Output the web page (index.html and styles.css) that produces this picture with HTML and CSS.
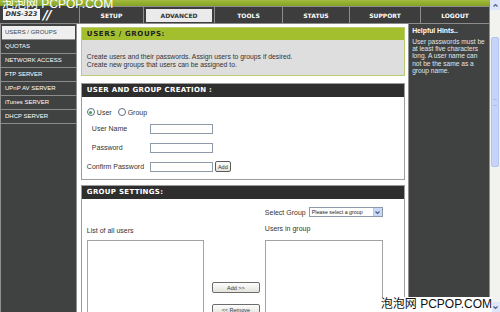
FILE: index.html
```html
<html>
<head>
<title>DNS-323 - Users / Groups</title>
<meta name="viewport" content="width=device-width, initial-scale=1">
<link rel="stylesheet" href="styles.css">
</head>
<body>
<div class="screen">
  <div class="page">
    <div class="topbar"></div>
    <div class="nav">
      <div class="brand"><span class="logo">DNS-323</span><span class="slashes">//</span></div>
      <ul class="tabs">
        <li class="tab-setup">SETUP</li>
        <li class="tab-advanced active"><span>ADVANCED</span></li>
        <li class="tab-tools">TOOLS</li>
        <li class="tab-status">STATUS</li>
        <li class="tab-support">SUPPORT</li>
        <li class="tab-logout">LOGOUT</li>
      </ul>
    </div>
    <div class="main">
      <div class="sidebar">
        <a class="active">USERS / GROUPS</a>
        <a>QUOTAS</a>
        <a>NETWORK ACCESS</a>
        <a>FTP SERVER</a>
        <a>UPnP AV SERVER</a>
        <a>iTunes SERVER</a>
        <a>DHCP SERVER</a>
      </div>
      <div class="content">
        <div class="box intro">
          <div class="box-head">USERS / GROUPS:</div>
          <div class="box-body">
            <p>Create users and their passwords. Assign users to groups if desired.</p>
            <p>Create new groups that users can be assigned to.</p>
          </div>
        </div>

        <div class="box creation">
          <div class="box-head">USER AND GROUP CREATION :</div>
          <div class="box-body">
            <div class="radios">
              <label><span class="radio checked"></span>User</label>
              <label><span class="radio"></span>Group</label>
            </div>
            <div class="row"><span class="label indent">User Name</span><input class="field" type="text"></div>
            <div class="row"><span class="label indent">Password</span><input class="field" type="password"></div>
            <div class="row"><span class="label">Confirm Password</span><input class="field" type="password"><button class="btn small">Add</button></div>
          </div>
        </div>

        <div class="box groups">
          <div class="box-head">GROUP SETTINGS:</div>
          <div class="box-body">
            <div class="select-row">
              <span>Select Group</span>
              <div class="select"><span class="select-text">Please select a group</span><span class="select-arrow"><svg width="7" height="7" viewBox="0 0 7 7"><path d="M1.5 2.5 L3.5 4.5 L5.5 2.5" fill="none" stroke="#4d6185" stroke-width="1.2"/></svg></span></div>
            </div>
            <span class="list-label left">List of all users</span>
            <span class="list-label right">Users in group</span>
            <div class="listbox left"></div>
            <div class="movers">
              <button class="btn wide">Add &gt;&gt;</button>
              <button class="btn wide">&lt;&lt; Remove</button>
            </div>
            <div class="listbox right"></div>
          </div>
        </div>
      </div>
      <div class="hints">
        <h4>Helpful Hints..</h4>
        <p>User passwords must be at least five characters long. A user name can not be the same as a group name.</p>
      </div>
    </div>
  </div>
  <div class="scrollbar">
    <div class="sb-btn"><svg width="7" height="7" viewBox="0 0 7 7"><path d="M1.5 4.5 L3.5 2.5 L5.5 4.5" fill="none" stroke="#4d6185" stroke-width="1.2"/></svg></div>
    <div class="sb-track">
      <div class="sb-thumb"><span></span></div>
    </div>
    <div class="sb-btn"><svg width="7" height="7" viewBox="0 0 7 7"><path d="M1.5 2.5 L3.5 4.5 L5.5 2.5" fill="none" stroke="#4d6185" stroke-width="1.2"/></svg></div>
  </div>
  <div class="mark mark-top">泡泡网 PCPOP.COM</div>
  <div class="mark mark-bottom">泡泡网 PCPOP.COM</div>
</div>
</body>
</html>
```

FILE: styles.css
```css
body {
  margin: 0;
  font-family: "Liberation Sans", Arial, sans-serif;
  background: #fff;
}

.screen {
  position: relative;
  width: 500px;
  height: 312px;
  overflow: hidden;
  display: flex;
}

.page {
  width: 490px;
  display: flex;
  flex-direction: column;
}

/* top green strip + tab bar */
.topbar {
  height: 6px;
  background: linear-gradient(#a2bd3c, #86a224);
}

.nav {
  height: 17px;
  display: flex;
  background: #3c3d3c;
  border-bottom: 1px solid #8c8c8c;
}

.brand {
  width: 79px;
  display: flex;
  align-items: flex-start;
}

.logo {
  margin: 3px 0 0 3px;
  width: 37px;
  height: 11px;
  background: #f4f4f4;
  color: #333;
  font-family: "DejaVu Sans", sans-serif;
  font-weight: bold;
  font-style: italic;
  font-size: 6.5px;
  line-height: 11px;
  text-align: center;
}

.slashes {
  margin-left: 3px;
  color: #fff;
  font-family: "DejaVu Sans", sans-serif;
  font-weight: bold;
  font-style: italic;
  font-size: 13px;
  line-height: 17px;
  letter-spacing: -1px;
}

.tabs {
  list-style: none;
  margin: 0;
  padding: 0;
  display: flex;
  border-right: 1px solid #8c8c8c;
}

.tabs li {
  border-left: 1px solid #8c8c8c;
  border-top: 1px solid #8c8c8c;
  color: #fff;
  font-family: "DejaVu Sans", sans-serif;
  font-weight: bold;
  font-size: 6px;
  display: flex;
  align-items: center;
  justify-content: center;
}

.tab-setup { width: 63px; }
.tab-advanced { width: 70px; }
.tab-tools { width: 67px; }
.tab-status { width: 66px; }
.tab-support { width: 70px; }
.tab-logout { width: 68px; }

.tabs li.active span {
  display: flex;
  align-items: center;
  justify-content: center;
  width: 66px;
  height: 13px;
  background: #ebebeb;
  color: #333;
}

/* body */
.main {
  flex: 1;
  display: flex;
  min-height: 0;
}

.sidebar {
  width: 75px;
  background: #404141;
  border-left: 1px solid #909090;
  border-right: 1px solid #909090;
  padding-top: 2px;
  display: flex;
  flex-direction: column;
}

.sidebar a {
  height: 13px;
  line-height: 13px;
  border-bottom: 1px solid #8c8c8c;
  padding-left: 4px;
  font-size: 6px;
  color: #fff;
  white-space: nowrap;
}

.sidebar a.active {
  background: #efefef;
  color: #444;
  margin: 0 1px;
  padding-left: 3px;
}

.content {
  width: 325px;
  padding: 3px 3px 0 4px;
  display: flex;
  flex-direction: column;
}

.box {
  border: 1px solid #9c9c9c;
}

.box-head {
  height: 13px;
  line-height: 13px;
  padding-left: 5px;
  background: #2e2e2e;
  color: #fff;
  font-family: "DejaVu Sans", sans-serif;
  font-weight: bold;
  font-size: 7px;
  letter-spacing: 0.3px;
}

.box-body {
  background: #fff;
  color: #333;
}

.intro {
  border-color: #b9cc73;
}

.intro .box-head {
  height: 12px;
  line-height: 12px;
  background: #a4bf2e;
  color: #222;
  letter-spacing: 0.6px;
}

.intro .box-body {
  height: 35px;
  padding: 13px 0 0 5px;
  box-sizing: border-box;
  background: #dedede;
  font-size: 6.8px;
  line-height: 8px;
}

.intro p {
  margin: 0;
}

.creation {
  margin-top: 7px;
}

.creation .box-body {
  padding: 8px 0 3px 5px;
  font-size: 7px;
}

.radios {
  height: 14px;
  display: flex;
  align-items: center;
  gap: 6px;
}

.radios label {
  display: flex;
  align-items: center;
  gap: 2px;
}

.radio {
  width: 6px;
  height: 6px;
  border: 1px solid #5b6d88;
  border-radius: 50%;
  background: #fff;
  display: flex;
  align-items: center;
  justify-content: center;
}

.radio.checked::after {
  content: '';
  width: 3px;
  height: 3px;
  border-radius: 50%;
  background: #3fa23a;
}

.row {
  height: 19px;
  display: flex;
  align-items: center;
}

.label {
  width: 63px;
  white-space: nowrap;
}

.label.indent {
  padding-left: 5px;
  width: 58px;
}

.field {
  width: 63px;
  height: 10px;
  margin: 0;
  padding: 0;
  border: 1px solid #8e9aa8;
  box-sizing: border-box;
  background: #fff;
}

.btn {
  margin: 0;
  padding: 0;
  border: 1px solid #5a5a5a;
  border-radius: 2px;
  background: linear-gradient(#fdfdfd, #e4e4dc);
  color: #333;
  font-family: "Liberation Sans", Arial, sans-serif;
  font-size: 5.5px;
}

.btn.small {
  margin-left: 2px;
  width: 16px;
  height: 11px;
}

.btn.wide {
  width: 48px;
  height: 11px;
  border-color: #6c6c6c;
}

.groups {
  margin-top: 5px;
  flex: 1;
}

.groups .box-body {
  padding: 7px 0 0 5px;
  display: grid;
  grid-template-columns: 117px 61px 118px;
  grid-template-rows: 12px 21px auto;
  font-size: 7px;
}

.select-row {
  grid-row: 1;
  grid-column: 3;
  display: flex;
  align-items: center;
  gap: 3px;
  white-space: nowrap;
}

.select {
  width: 78px;
  height: 10px;
  border: 1px solid #8e9aa8;
  box-sizing: border-box;
  display: flex;
  align-items: center;
  background: #fff;
}

.select-text {
  flex: 1;
  padding-left: 2px;
  font-size: 5.3px;
  color: #222;
}

.select-arrow {
  width: 8px;
  height: 8px;
  background: #c9d7f8;
  border-left: 1px solid #b6c6ee;
  display: flex;
  align-items: center;
  justify-content: center;
}

.list-label {
  grid-row: 2;
  align-self: center;
}

.list-label.left {
  grid-column: 1;
  padding-top: 3px;
}

.list-label.right {
  grid-column: 3;
}

.listbox {
  grid-row: 3;
  height: 90px;
  border: 1px solid #a3a3a3;
  background: #fff;
  margin-top: 1px;
}

.listbox.left {
  grid-column: 1;
}

.listbox.right {
  grid-column: 3;
}

.movers {
  grid-row: 3;
  grid-column: 2;
  display: flex;
  flex-direction: column;
  align-items: center;
  padding: 43px 0 0 3px;
  gap: 11px;
}

/* right help column */
.hints {
  width: 75px;
  padding: 2px 2px 0 3px;
  background: #404141;
  border-left: 1px solid #909090;
  border-right: 1px solid #909090;
  color: #e4e4e4;
}

.hints h4 {
  margin: 0;
  font-size: 6.8px;
  line-height: 10px;
  color: #fff;
}

.hints p {
  margin: 2px 0 0;
  font-size: 6.6px;
  line-height: 7.2px;
}

/* XP-style scrollbar strip */
.scrollbar {
  width: 10px;
  display: flex;
  flex-direction: column;
  background: #f2f2ee;
}

.sb-btn {
  height: 10px;
  display: flex;
  align-items: center;
  justify-content: center;
  background: #dde6fb;
}

.sb-track {
  flex: 1;
  padding-top: 27px;
}

.sb-thumb {
  height: 130px;
  margin: 0 1px;
  background: #c6d4fa;
  border: 1px solid #b3c4f0;
  border-radius: 2px;
  box-sizing: border-box;
  display: flex;
  align-items: center;
  justify-content: center;
}

.sb-thumb span {
  width: 4px;
  height: 5px;
  border-top: 1px solid #a9bbe8;
  border-bottom: 1px solid #a9bbe8;
}

/* site watermarks laid over the shot */
.mark {
  position: absolute;
  font-family: "Liberation Sans", "Noto Sans CJK SC", sans-serif;
  font-size: 12px;
  line-height: 15px;
  white-space: nowrap;
}

.mark-top {
  left: 2px;
  top: -3px;
  color: #fff;
}

.mark-bottom {
  right: 8px;
  bottom: 0;
  height: 15px;
  padding-left: 2px;
  background: #fff;
  color: #111;
}
```
